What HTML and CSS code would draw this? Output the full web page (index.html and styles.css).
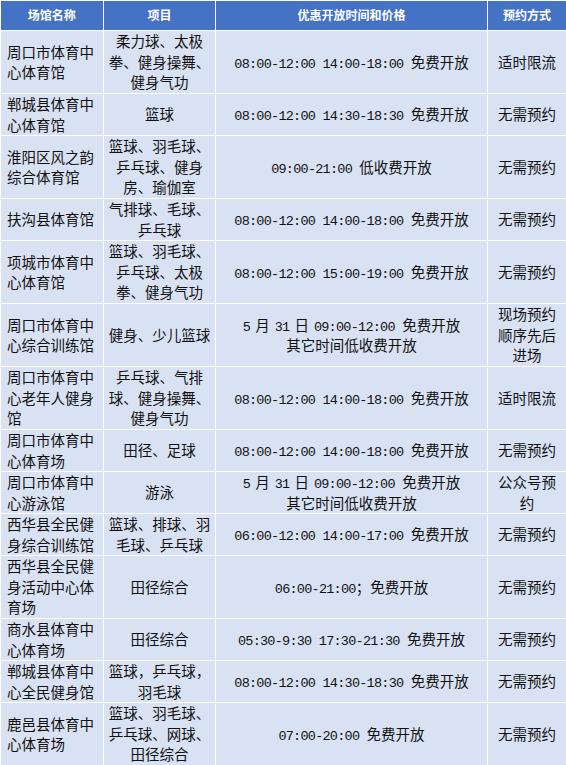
FILE: index.html
```html
<!DOCTYPE html>
<html lang="zh-CN">
<head>
<meta charset="utf-8">
<title>场馆开放</title>
<link rel="stylesheet" href="styles.css">
</head>
<body>
<table class="tbl">
  <colgroup>
    <col class="c1"><col class="c2"><col class="c3"><col class="c4">
  </colgroup>
  <thead>
    <tr class="head">
      <th>场馆名称</th><th>项目</th><th>优惠开放时间和价格</th><th>预约方式</th>
    </tr>
  </thead>
  <tbody>
    <tr class="tall">
      <td class="name">周口市体育中<br>心体育馆</td>
      <td>柔力球、太极<br>拳、健身操舞、<br>健身气功</td>
      <td><span class="t">08:00-12:00 14:00-18:00 </span>免费开放</td>
      <td>适时限流</td>
    </tr>
    <tr class="short">
      <td class="name">郸城县体育中<br>心体育馆</td>
      <td>篮球</td>
      <td><span class="t">08:00-12:00 14:30-18:30 </span>免费开放</td>
      <td>无需预约</td>
    </tr>
    <tr class="tall">
      <td class="name">淮阳区风之韵<br>综合体育馆</td>
      <td>篮球、羽毛球、<br>乒乓球、健身<br>房、瑜伽室</td>
      <td><span class="t">09:00-21:00 </span>低收费开放</td>
      <td>无需预约</td>
    </tr>
    <tr class="short">
      <td class="name">扶沟县体育馆</td>
      <td>气排球、毛球、<br>乒乓球</td>
      <td><span class="t">08:00-12:00 14:00-18:00 </span>免费开放</td>
      <td>无需预约</td>
    </tr>
    <tr class="tall">
      <td class="name">项城市体育中<br>心体育馆</td>
      <td>篮球、羽毛球、<br>乒乓球、太极<br>拳、健身气功</td>
      <td><span class="t">08:00-12:00 15:00-19:00 </span>免费开放</td>
      <td>无需预约</td>
    </tr>
    <tr class="tall">
      <td class="name">周口市体育中<br>心综合训练馆</td>
      <td>健身、少儿篮球</td>
      <td><span class="t">5</span><span class="u">月</span><span class="t">31</span><span class="u">日</span><span class="t">09:00-12:00 </span>免费开放<br>其它时间低收费开放</td>
      <td>现场预约<br>顺序先后<br>进场</td>
    </tr>
    <tr class="tall">
      <td class="name">周口市体育中<br>心老年人健身<br>馆</td>
      <td>乒乓球、气排<br>球、健身操舞、<br>健身气功</td>
      <td><span class="t">08:00-12:00 14:00-18:00 </span>免费开放</td>
      <td>适时限流</td>
    </tr>
    <tr class="short">
      <td class="name">周口市体育中<br>心体育场</td>
      <td>田径、足球</td>
      <td><span class="t">08:00-12:00 14:00-18:00 </span>免费开放</td>
      <td>无需预约</td>
    </tr>
    <tr class="short">
      <td class="name">周口市体育中<br>心游泳馆</td>
      <td>游泳</td>
      <td><span class="t">5</span><span class="u">月</span><span class="t">31</span><span class="u">日</span><span class="t">09:00-12:00 </span>免费开放<br>其它时间低收费开放</td>
      <td>公众号预<br>约</td>
    </tr>
    <tr class="short">
      <td class="name">西华县全民健<br>身综合训练馆</td>
      <td>篮球、排球、羽<br>毛球、乒乓球</td>
      <td><span class="t">06:00-12:00 14:00-17:00 </span>免费开放</td>
      <td>无需预约</td>
    </tr>
    <tr class="tall">
      <td class="name">西华县全民健<br>身活动中心体<br>育场</td>
      <td>田径综合</td>
      <td><span class="t">06:00-21:00</span>；免费开放</td>
      <td>无需预约</td>
    </tr>
    <tr class="short">
      <td class="name">商水县体育中<br>心体育场</td>
      <td>田径综合</td>
      <td><span class="t">05:30-9:30 17:30-21:30 </span>免费开放</td>
      <td>无需预约</td>
    </tr>
    <tr class="short">
      <td class="name">郸城县体育中<br>心全民健身馆</td>
      <td>篮球，乒乓球，<br>羽毛球</td>
      <td><span class="t">08:00-12:00 14:30-18:30 </span>免费开放</td>
      <td>无需预约</td>
    </tr>
    <tr class="tall">
      <td class="name">鹿邑县体育中<br>心体育场</td>
      <td>篮球、羽毛球、<br>乒乓球、网球、<br>田径综合</td>
      <td><span class="t">07:00-20:00 </span>免费开放</td>
      <td>无需预约</td>
    </tr>
  </tbody>
</table>
</body>
</html>
```
FILE: styles.css
```css
html, body {
  margin: 0;
  padding: 0;
  background: #ffffff;
}
body {
  width: 566px;
  height: 765px;
  overflow: hidden;
}
.tbl {
  width: 566px;
  table-layout: fixed;
  border-collapse: collapse;
  font-family: "Noto Sans CJK SC", "Noto Sans", sans-serif;
  font-size: 14.5px;
  color: #111111;
}
.c1 { width: 103px; }
.c2 { width: 112px; }
.c3 { width: 272px; }
.c4 { width: 79px; }
.tbl th, .tbl td {
  border: 1px solid #ffffff;
  padding: 0 2px;
  text-align: center;
  vertical-align: middle;
  white-space: nowrap;
  overflow: hidden;
  line-height: 20.5px;
}
.tbl td {
  background: #d9e2f3;
}
.tbl td.name {
  text-align: left;
  padding-left: 6px;
}
.head th {
  background: #4472c4;
  color: #ffffff;
  font-size: 12px;
  font-weight: bold;
  height: 29px;
  padding: 0;
}
.head th:first-child { border-left: 0; }
.tall td { height: 62px; }
.short td { height: 41px; }
.t {
  font-family: "Liberation Mono", monospace;
  font-size: 13.5px;
  line-height: 1;
  letter-spacing: -0.75px;
  white-space: pre;
}
.u {
  padding: 0 5px;
}
```
